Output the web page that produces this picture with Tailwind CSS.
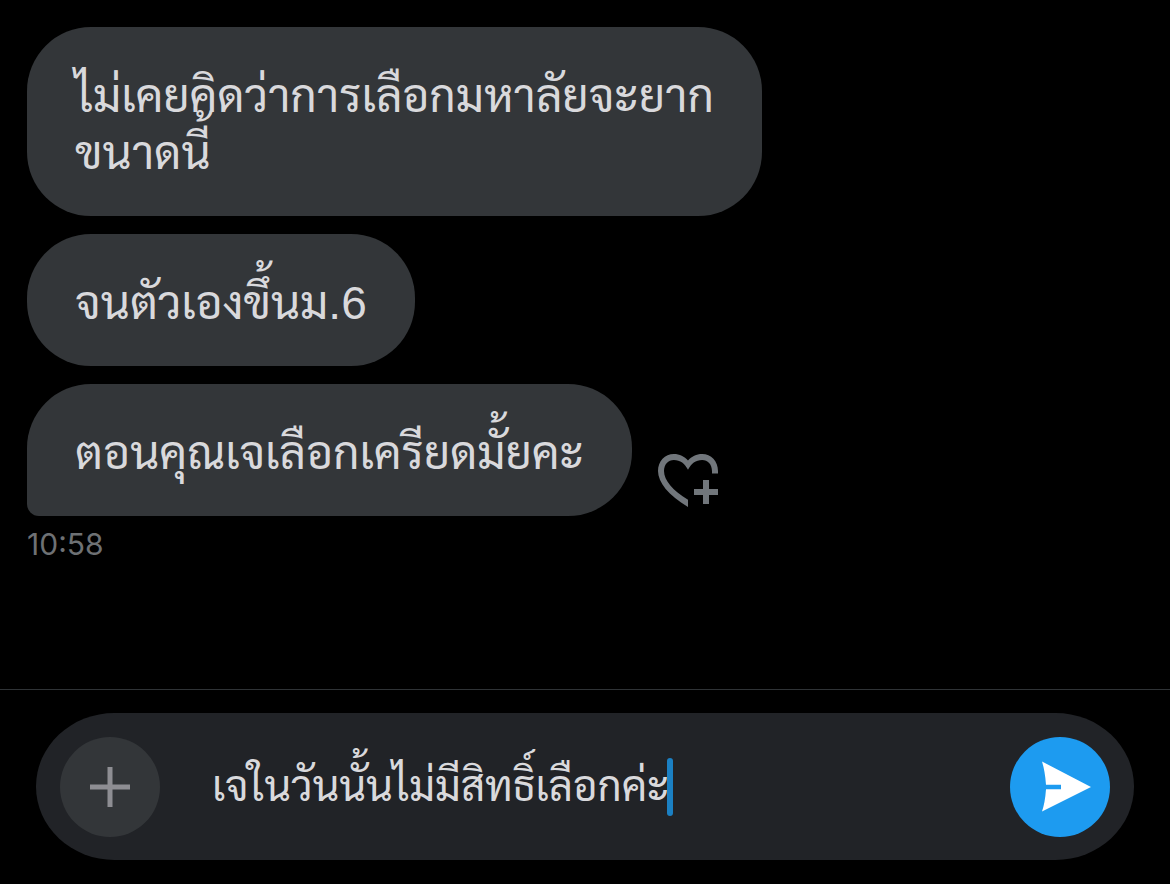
<!DOCTYPE html>
<html lang="th">

<head>
  <meta charset="UTF-8">
  <meta name="viewport" content="width=device-width, initial-scale=1.0">
  <title>Messages</title>
  <script src="https://cdn.jsdelivr.net/npm/@tailwindcss/browser@4"></script>
</head>

<body class="bg-black text-[#d9d9dc] font-['Liberation_Sans','Sarabun','Loma',sans-serif]">
  <div class="flex flex-col min-h-screen">
    <main class="flex-1 flex flex-col items-start gap-[18px] p-[27px] text-[46px] leading-[57px]">
      <p class="rounded-[64px] bg-[#333639] px-12 pt-[41px] pb-[34px]">ไม่เคยคิดว่าการเลือกมหาลัยจะยาก<br>ขนาดนี้</p>
      <p class="rounded-[64px] bg-[#333639] px-12 pt-[41px] pb-[34px]">จนตัวเองขึ้นม.6</p>
      <div>
        <div class="flex items-end gap-5">
          <p class="rounded-[64px] rounded-bl-xl bg-[#333639] px-12 pt-[41px] pb-[34px]">ตอนคุณเจเลือกเครียดมั้ยคะ</p>
          <button aria-label="Add reaction" class="text-[#71767b]">
            <svg class="size-[72px]" viewBox="0 0 24 24" fill="currentColor">
              <path d="M12 21C5.5 17.1 2 12.8 2 9C2 5.6 4.3 3.3 7.3 3.3C9.2 3.3 10.8 4.1 12 5.5C13.2 4.1 14.8 3.3 16.7 3.3C19.7 3.3 22 5.6 22 9V9.8H20V9C20 6.7 18.6 5.3 16.7 5.3C14.6 5.3 13 6.5 12 8.6C11 6.5 9.4 5.3 7.3 5.3C5.4 5.3 4 6.7 4 9C4 12.1 7 15.6 12 18.6Z" />
              <path d="M17 12h2v3h3v2h-3v3h-2v-3h-3v-2h3z" />
            </svg>
          </button>
        </div>
        <time class="block pt-2 text-[30px] leading-10 text-[#6e7174] font-['Inter',sans-serif]">10:58</time>
      </div>
    </main>

    <footer class="border-t border-[#2f3336] px-9 pt-[23px] pb-6">
      <form class="flex items-center rounded-[79px/74px] bg-[#212327] px-6 h-[147px]">
        <button type="button" aria-label="Add attachment" class="shrink-0 rounded-full bg-[#333639] text-[#8e8e93]">
          <svg class="size-[100px]" viewBox="0 0 100 100" stroke="currentColor" stroke-width="5">
            <path d="M50 30v40M30 50h40" />
          </svg>
        </button>
        <div class="flex flex-1 items-center min-w-0 pl-[52px]">
          <input type="text" aria-label="Message" value="เจในวันนั้นไม่มีสิทธิ์เลือกค่ะ"
            class="field-sizing-content h-[100px] min-w-0 text-[42px] leading-[100px] outline-none">
          <span class="w-[6px] h-[58px] -ml-0.5 shrink-0 rounded-full bg-[#1b80c3]"></span>
        </div>
        <button type="submit" aria-label="Send" class="shrink-0 rounded-full bg-[#1d9bf0] text-white">
          <svg class="size-[100px]" viewBox="0 0 100 100" fill="currentColor">
            <path d="M32 24.5L81 50L32 74.5Q35 66 36 52.3H51V47.7H36Q35 34 32 24.5Z" />
          </svg>
        </button>
      </form>
    </footer>
  </div>
</body>

</html>
